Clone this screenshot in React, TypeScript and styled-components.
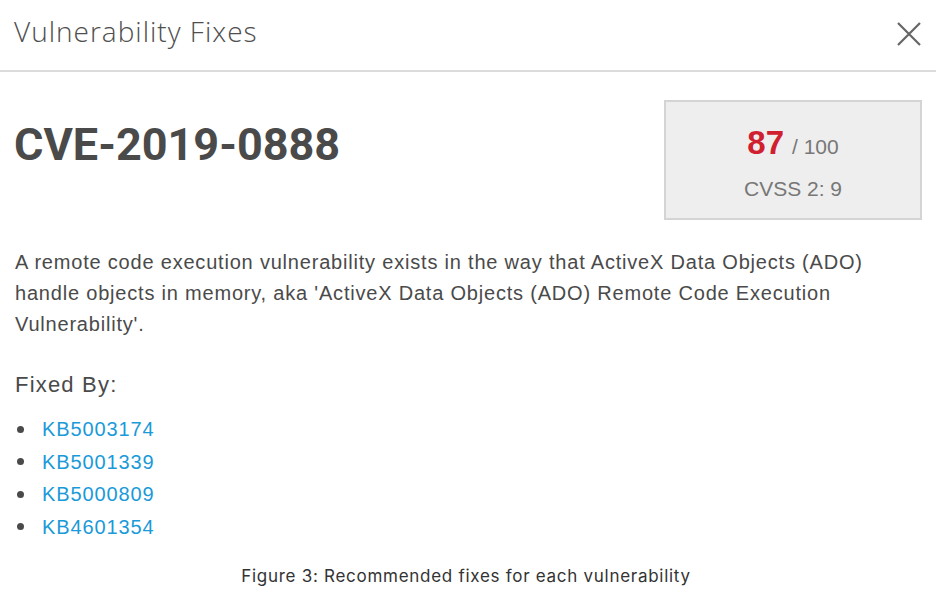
import React from "react";
import styled, { createGlobalStyle } from "styled-components";

const Global = createGlobalStyle`
  html, body { margin: 0; padding: 0; background: #fff; }
  body { font-family: "Liberation Sans", Arial, sans-serif; color: #4a4a4a; }
`;

const Page = styled.div`
  width: 936px;
  height: 602px;
  display: flex;
  flex-direction: column;
  overflow: hidden;
`;

const Header = styled.header`
  height: 72px;
  box-sizing: border-box;
  display: flex;
  align-items: center;
  justify-content: space-between;
  padding: 0 15px 2px 14px;
  border-bottom: 2px solid #dcdcdc;
`;

const Title = styled.h1`
  margin: 0 0 7px 0;
  font-family: "Open Sans", Roboto, sans-serif;
  font-weight: 300;
  font-size: 28px;
  line-height: 1;
  color: #4e4e4e;
  letter-spacing: 1px;
`;

const CloseButton = styled.button`
  border: none;
  background: transparent;
  padding: 0;
  width: 24px;
  height: 24px;
  display: flex;
  align-items: center;
  justify-content: center;
  cursor: pointer;
`;

const Body = styled.main`
  padding: 28px 14px 0 15px;
  display: flex;
  flex-direction: column;
`;

const TopRow = styled.div`
  display: flex;
  justify-content: space-between;
  align-items: flex-start;
`;

const CveTitle = styled.h2`
  margin: 22px 0 0 -1px;
  font-family: Roboto, "Liberation Sans", sans-serif;
  font-weight: 700;
  font-size: 45px;
  line-height: 1;
  color: #4a4a4a;
`;

const ScoreBox = styled.div`
  width: 258px;
  height: 120px;
  box-sizing: border-box;
  background: #eeeeee;
  border: 2px solid #d4d4d4;
  display: flex;
  flex-direction: column;
  align-items: center;
  padding-top: 22px;
`;

const ScoreLine = styled.div`
  display: flex;
  align-items: baseline;
  gap: 8px;
  line-height: 38px;
`;

const Score = styled.span`
  font-weight: 700;
  font-size: 33px;
  color: #d0202f;
`;

const OutOf = styled.span`
  font-size: 21px;
  color: #777;
`;

const Cvss = styled.div`
  margin-top: 11px;
  font-size: 21px;
  line-height: 24px;
  color: #777;
`;

const Description = styled.p`
  margin: 27px 0 0 0;
  font-size: 20px;
  line-height: 31px;
  letter-spacing: 0.8px;
  color: #4a4a4a;
  max-width: 880px;
`;

const SectionTitle = styled.h3`
  margin: 31px 0 0 0;
  font-weight: 400;
  font-size: 22px;
  line-height: 28px;
  letter-spacing: 1.2px;
  color: #4a4a4a;
`;

const FixList = styled.ul`
  margin: 14px 0 0 0;
  padding: 0;
  list-style: none;
`;

const FixItem = styled.li`
  display: flex;
  align-items: center;
  height: 32.5px;
  line-height: 32.5px;
  font-size: 20px;
  letter-spacing: 0.9px;
`;

const Bullet = styled.span`
  flex: none;
  width: 7px;
  height: 7px;
  border-radius: 50%;
  background: #4a4a4a;
  margin: 0 18px 0 2px;
`;

const FixLink = styled.a`
  color: #1a9ad8;
  text-decoration: none;
`;

const Caption = styled.div`
  margin-top: auto;
  padding-bottom: 16px;
  text-align: center;
  font-family: Inter, "Liberation Sans", sans-serif;
  font-size: 17px;
  letter-spacing: 0.72px;
  color: #333;
  padding-right: 4px;
`;

const fixes = ["KB5003174", "KB5001339", "KB5000809", "KB4601354"];

export default function App() {
  return (
    <Page>
      <Global />
      <Header>
        <Title>Vulnerability Fixes</Title>
        <CloseButton aria-label="Close">
          <svg width="24" height="24" viewBox="0 0 24 24">
            <path d="M1 1 L23 23 M23 1 L1 23" stroke="#666" strokeWidth="2.2" />
          </svg>
        </CloseButton>
      </Header>
      <Body>
        <TopRow>
          <CveTitle>CVE-2019-0888</CveTitle>
          <ScoreBox>
            <ScoreLine>
              <Score>87</Score>
              <OutOf>/ 100</OutOf>
            </ScoreLine>
            <Cvss>CVSS 2: 9</Cvss>
          </ScoreBox>
        </TopRow>
        <Description>
          A remote code execution vulnerability exists in the way that ActiveX Data Objects (ADO)
          handle objects in memory, aka 'ActiveX Data Objects (ADO) Remote Code Execution
          Vulnerability'.
        </Description>
        <SectionTitle>Fixed By:</SectionTitle>
        <FixList>
          {fixes.map((f) => (
            <FixItem key={f}>
              <Bullet />
              <FixLink href="#">{f}</FixLink>
            </FixItem>
          ))}
        </FixList>
      </Body>
      <Caption>Figure 3: Recommended fixes for each vulnerability</Caption>
    </Page>
  );
}
